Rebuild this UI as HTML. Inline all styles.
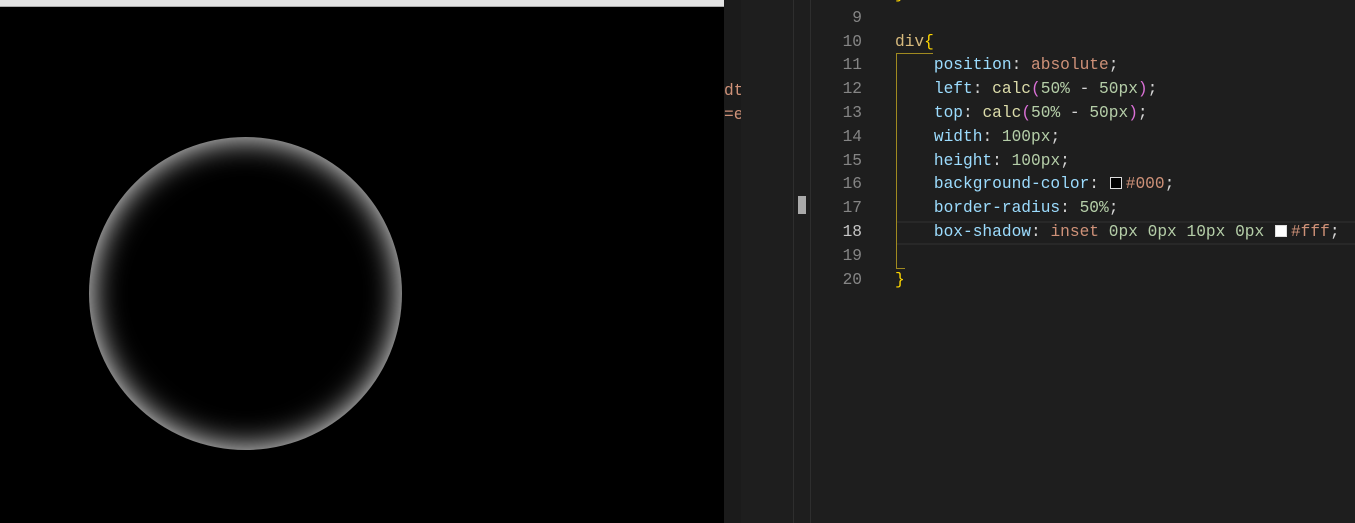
<!DOCTYPE html>
<html><head><style>
body{margin:0;width:1355px;height:523px;overflow:hidden;background:#1e1e1e;position:relative;font-family:"Liberation Mono",monospace}
.top{position:absolute;left:0;top:0;width:724px;height:6px;background:#e3e3e3;border-bottom:1px solid #aaa}
.left{position:absolute;left:0;top:7px;width:724px;height:516px;background:#000}
.circ{position:absolute;left:89px;top:130px;width:313px;height:313px;border-radius:50%;background:#000;box-shadow:inset 0 0 32px 0 #fff}
.p1{position:absolute;left:724px;top:0;width:17px;height:523px;background:#1b1b1b}
.p2{position:absolute;left:741px;top:0;width:52px;height:523px;background:#1e1e1e;border-right:1px solid #2e2e2e}
.sb{position:absolute;left:794px;top:0;width:16px;height:523px;background:#1e1e1e;border-right:1px solid #2e2e2e}
.code{position:absolute;left:810px;top:-17px;right:0;font-size:16.2px;line-height:23.8px;white-space:pre}
.ln{position:absolute;left:0;width:52px;text-align:right;color:#858585}
.tx{position:absolute;left:85px;color:#d4d4d4}
.k{color:#9cdcfe}.v{color:#ce9178}.n{color:#b5cea8}.s{color:#d7ba7d}.f{color:#dcdcaa}.b{color:#ffd700}.m{color:#da70d6}
.sw{display:inline-block;width:10px;height:10px;border:1px solid #ddd;margin:0 4px 0 1px;vertical-align:-1px}
</style></head><body>
<div class="top"></div><div class="left"><div class="circ"></div></div>
<div class="p1"></div><div class="p2"></div><div class="sb"><div style="position:absolute;left:4px;top:196px;width:8px;height:18px;background:#aaa"></div></div>
<div style="position:absolute;left:724px;top:79px;width:17px;overflow:hidden;color:#ce9178;font-size:16.2px;line-height:24px;white-space:pre">dt<br>=e</div>
<div style="position:absolute;left:897px;top:221px;width:458px;height:20px;border-top:2px solid #282828;border-bottom:2px solid #282828"></div>
<div style="position:absolute;left:896px;top:54px;width:1px;height:214px;background:#a08a20"></div>
<div style="position:absolute;left:896px;top:53px;width:37px;height:1px;background:#a08a20"></div>
<div style="position:absolute;left:896px;top:268px;width:9px;height:1px;background:#a08a20"></div>
<div class="code">
<div class="ln" style="top:0">8</div><div class="tx b" style="top:0">}</div>
<div class="ln" style="top:23.8px">9</div>
<div class="ln" style="top:47.6px">10</div><div class="tx" style="top:47.6px"><span class="s">div</span><span class="b">{</span></div>
<div class="ln" style="top:71.4px">11</div><div class="tx" style="top:71.4px">    <span class="k">position</span>: <span class="v">absolute</span>;</div>
<div class="ln" style="top:95.2px">12</div><div class="tx" style="top:95.2px">    <span class="k">left</span>: <span class="f">calc</span><span class="m">(</span><span class="n">50%</span> - <span class="n">50px</span><span class="m">)</span>;</div>
<div class="ln" style="top:119px">13</div><div class="tx" style="top:119px">    <span class="k">top</span>: <span class="f">calc</span><span class="m">(</span><span class="n">50%</span> - <span class="n">50px</span><span class="m">)</span>;</div>
<div class="ln" style="top:142.8px">14</div><div class="tx" style="top:142.8px">    <span class="k">width</span>: <span class="n">100px</span>;</div>
<div class="ln" style="top:166.6px">15</div><div class="tx" style="top:166.6px">    <span class="k">height</span>: <span class="n">100px</span>;</div>
<div class="ln" style="top:190.4px">16</div><div class="tx" style="top:190.4px">    <span class="k">background-color</span>: <span class="sw" style="background:#000"></span><span class="v">#000</span>;</div>
<div class="ln" style="top:214.2px">17</div><div class="tx" style="top:214.2px">    <span class="k">border-radius</span>: <span class="n">50%</span>;</div>
<div class="ln" style="top:238px;color:#c6c6c6">18</div><div class="tx" style="top:238px">    <span class="k">box-shadow</span>: <span class="v">inset</span> <span class="n">0px</span> <span class="n">0px</span> <span class="n">10px</span> <span class="n">0px</span> <span class="sw" style="background:#fff"></span><span class="v">#fff</span>;</div>
<div class="ln" style="top:261.8px">19</div>
<div class="ln" style="top:285.6px">20</div><div class="tx b" style="top:285.6px">}</div>
</div>
</body></html>
